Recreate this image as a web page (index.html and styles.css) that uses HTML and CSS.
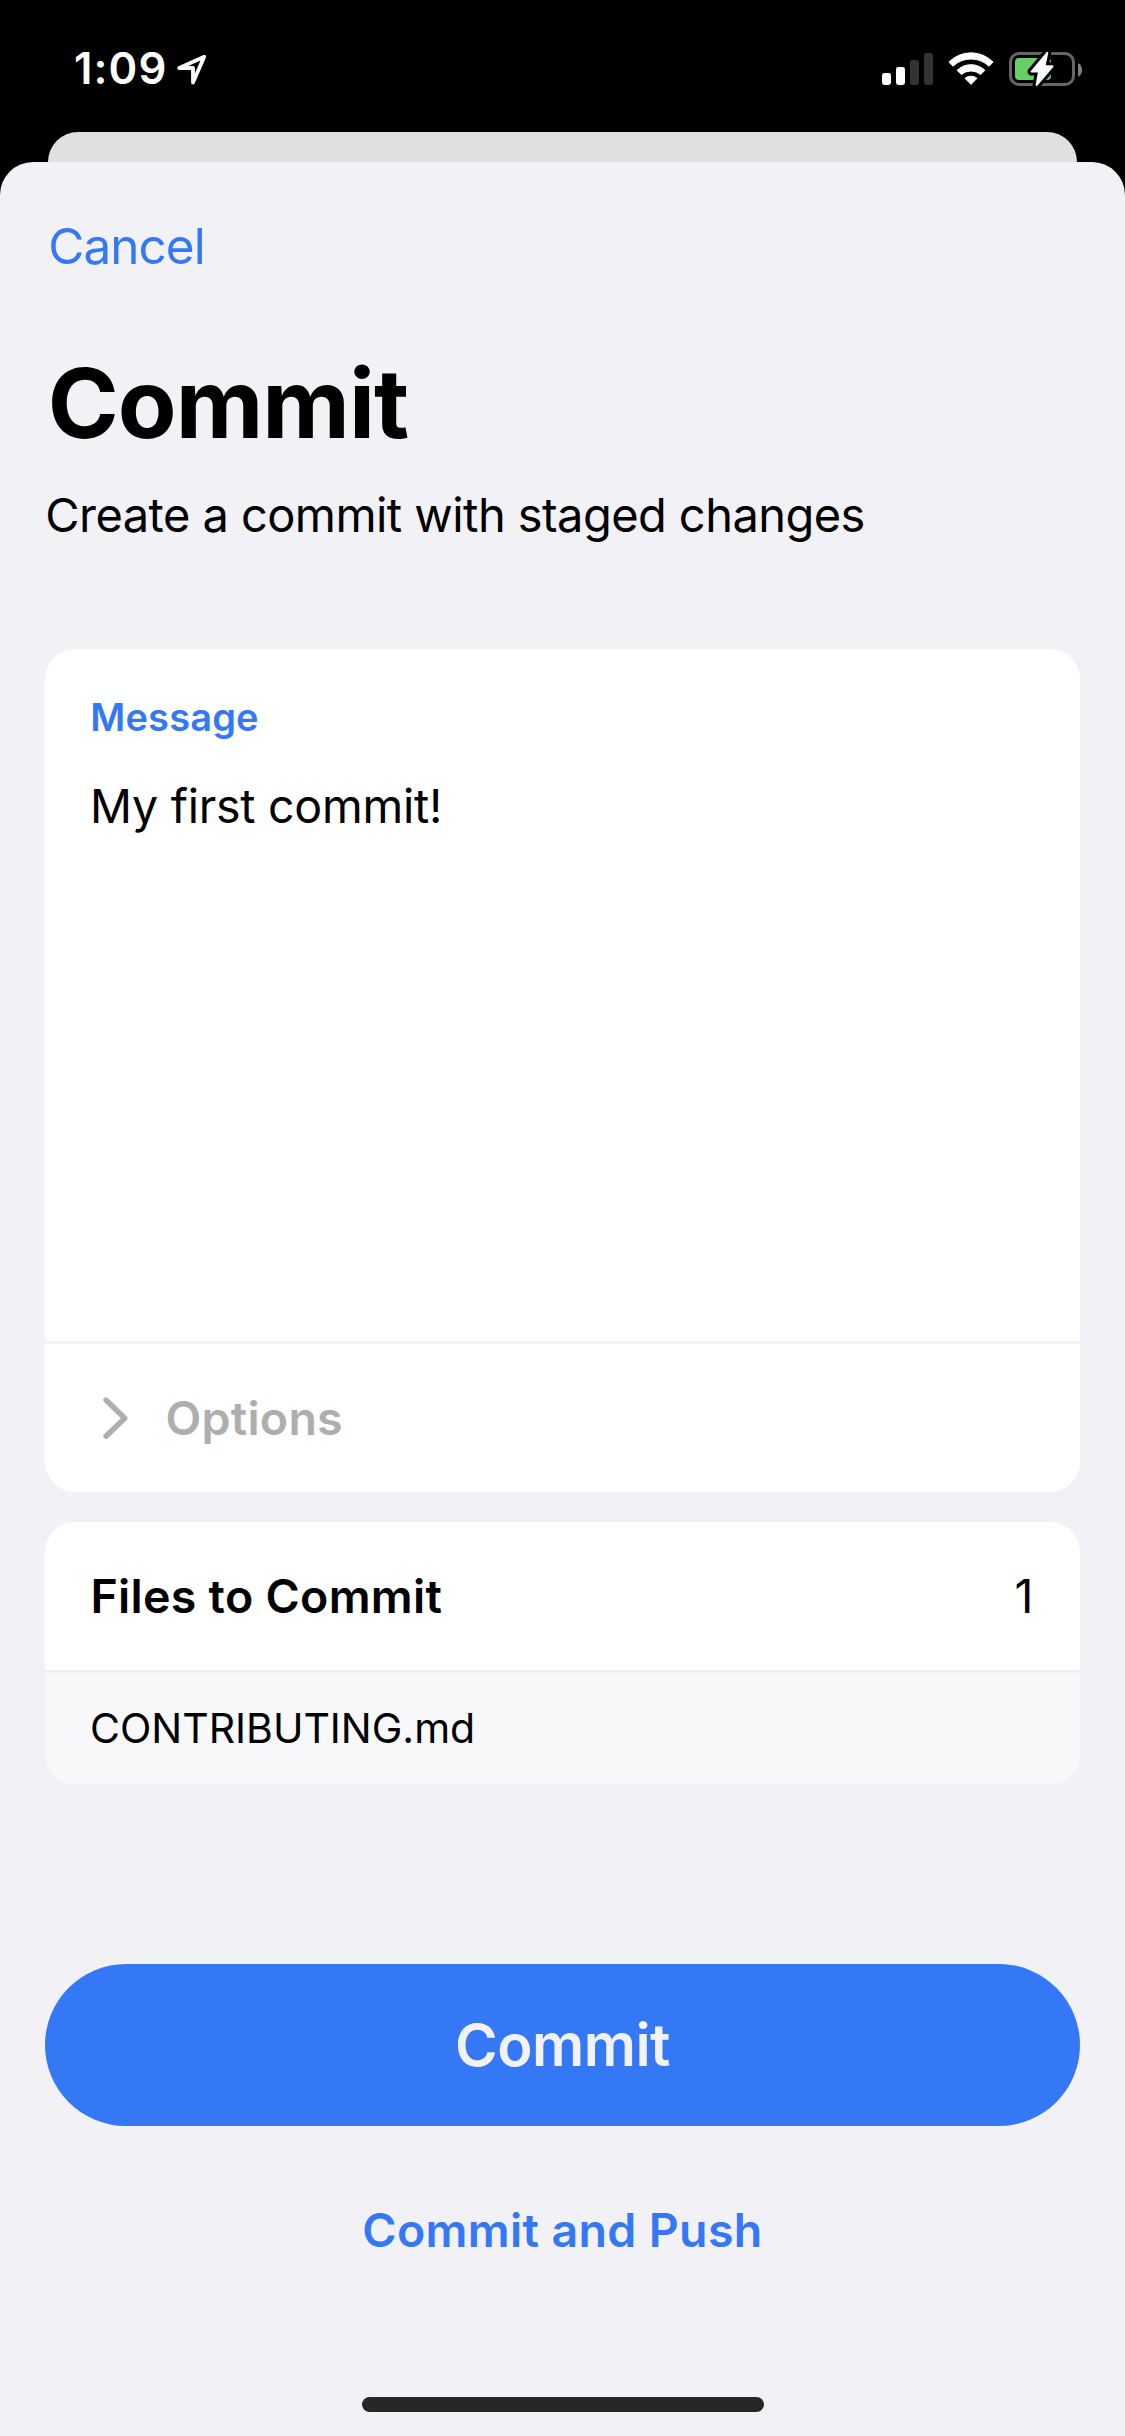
FILE: index.html
```html
<!DOCTYPE html>
<html lang="en">
<head>
<meta charset="utf-8">
<title>Commit</title>
<link rel="stylesheet" href="styles.css">
</head>
<body>
<div class="screen">
  <header class="status">
    <div class="status-left">
      <span class="time">1:09</span>
      <svg class="location" width="32" height="32" viewBox="0 0 32 32"><path d="M28.2 3.8 3.2 15H17V29.6Z" fill="none" stroke="#fff" stroke-width="3.8" stroke-linejoin="round"/></svg>
    </div>
    <div class="status-right">
      <svg class="signal" width="51" height="34" viewBox="0 0 51 34">
        <g fill="#fff"><rect x="0" y="21" width="9" height="12" rx="2.4"/><rect x="14" y="15" width="9" height="18" rx="2.4"/></g>
        <g fill="#333"><rect x="28" y="8" width="9" height="25" rx="2.4"/><rect x="42" y="1" width="9" height="32" rx="2.4"/></g>
      </svg>
      <svg class="wifi" width="46" height="34" viewBox="0 0 46 34">
        <g fill="#fff" stroke="#fff" stroke-width="1" stroke-linejoin="round">
          <path d="M.9 10.1A31 31 0 0 1 45.1 10.1L41 14.2A26 26 0 0 0 5 14.2Z"/>
          <path d="M9.1 18.3A20 20 0 0 1 36.9 18.3L32.6 22.6A14.5 14.5 0 0 0 13.4 22.6Z"/>
          <path d="M17 26.3A9.5 9.5 0 0 1 29 26.3L23 32.4Z"/>
        </g>
      </svg>
      <svg class="battery" width="74" height="36" viewBox="0 0 74 36">
        <rect x="1.5" y="2.5" width="63" height="31" rx="8.5" fill="none" stroke="#666" stroke-width="3"/>
        <path d="M69 12.3c5.4 2 5.4 11.4 0 13.4Z" fill="#808080"/>
        <rect x="6" y="7" width="36" height="22" rx="4" fill="#65cf68"/>
        <path d="M38.3 1.8 22.6 20.6H30L27.6 34 43.5 15.3H35.5Z" fill="#fff" stroke="#000" stroke-width="8" stroke-linejoin="round"/>
        <path d="M38.3 1.8 22.6 20.6H30L27.6 34 43.5 15.3H35.5Z" fill="#fff" stroke="#fff" stroke-width="2" stroke-linejoin="round"/>
      </svg>
    </div>
  </header>
  <div class="behind"></div>
  <main class="sheet">
    <a class="cancel">Cancel</a>
    <h1 class="title">Commit</h1>
    <p class="subtitle">Create a commit with staged changes</p>
    <section class="card card-message">
      <div class="message">
        <div class="label">Message</div>
        <div class="input">My first commit!</div>
      </div>
      <div class="options">
        <svg class="chevron" width="30" height="46" viewBox="0 0 30 46"><path d="M5 5 23.8 23.2 5 41.2" fill="none" stroke="#aeaeb0" stroke-width="5.4" stroke-linecap="round" stroke-linejoin="round"/></svg>
        <span class="options-text">Options</span>
      </div>
    </section>
    <section class="card">
      <div class="files-head"><span class="files-title">Files to Commit</span><span class="count">1</span></div>
      <div class="file">CONTRIBUTING.md</div>
    </section>
    <div class="button"><span>Commit</span></div>
    <div class="push"><span>Commit and Push</span></div>
    <div class="home"></div>
  </main>
</div>
</body>
</html>
```
FILE: styles.css
```css
* { box-sizing: border-box; }
body {
  margin: 0;
  background: #000;
  color: #000;
  font-family: Inter, "Liberation Sans", sans-serif;
  font-size: 46.5px;
  line-height: 60px;
}
.screen { width: 1125px; height: 2436px; display: flex; flex-direction: column; overflow: hidden; }
.status { height: 132px; padding: 6px 42px 0 74px; display: flex; align-items: center; justify-content: space-between; }
.status-left, .status-right { display: flex; align-items: center; }
.time { color: #fff; font-size: 43.6px; font-weight: 600; letter-spacing: 1.1px; width: 101.5px; white-space: nowrap; }
.status svg { display: block; }
.wifi { margin-left: 15px; }
.battery { margin-left: 15px; }
.behind { height: 30px; margin: 0 48px; background: #e0e0e0; border-radius: 30px 30px 0 0; flex: none; }
.sheet {
  flex: 1;
  display: flex;
  flex-direction: column;
  padding: 54px 45px 24px;
  background: #f2f1f6;
  border-radius: 33px 33px 0 0;
}
.cancel { color: #3478f6; font-size: 49.5px; letter-spacing: -1.0px; padding-left: 3.3px; }
.title { margin: 69px 0 0; padding-left: 2.8px; font-size: 96px; font-weight: 700; line-height: 116px; letter-spacing: -1px; }
.subtitle { margin: 24px 0 0; font-size: 47px; letter-spacing: -0.56px; padding-left: .3px; white-space: nowrap; }
.card { border-radius: 30px; background: #fff; overflow: hidden; flex: none; }
.card-message { margin: 104px 0 30px; }
.message { height: 695px; padding: 45px 45px 0; border-bottom: 3px solid #f2f1f6; }
.label { color: #3478f6; font-size: 38px; font-weight: 600; line-height: 46px; letter-spacing: .15px; padding-left: .3px; }
.input { margin-top: 36px; letter-spacing: -0.25px; }
.options { height: 148px; padding-left: 56px; display: flex; align-items: center; }
.options-text { margin-left: 34.5px; color: #aeaeb0; font-weight: 600; letter-spacing: .25px; }
.files-head { height: 151px; padding: 0 45px; display: flex; align-items: center; justify-content: space-between; border-bottom: 3px solid #f2f1f6; }
.files-title { font-weight: 600; letter-spacing: .3px; padding-left: .4px; }
.count { padding-right: 1.5px; }
.file { height: 111px; padding: 0 45px 2px; display: flex; align-items: center; background: #f8f8fa; font-size: 41px; letter-spacing: 0; }
.button {
  margin-top: 180px;
  height: 162px;
  border-radius: 81px;
  background: #3478f6;
  color: #f2f1f6;
  display: flex;
  align-items: center;
  justify-content: center;
  font-size: 58px;
  font-weight: 600;
  letter-spacing: -0.5px;
  flex: none;
}
.push { margin-top: 74px; color: #3478f6; font-weight: 600; letter-spacing: .36px; text-align: center; }
.home { margin: auto auto 0; width: 402px; height: 15px; border-radius: 8px; background: #272727; }
```
